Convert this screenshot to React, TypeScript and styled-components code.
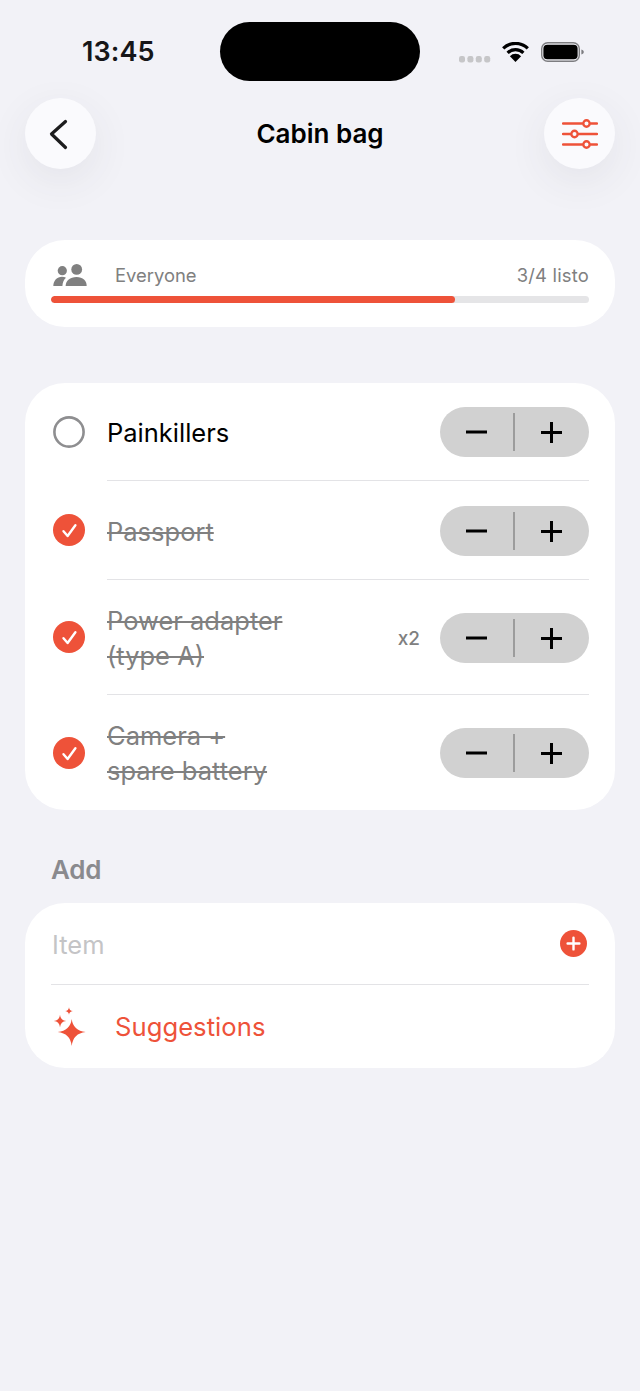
import React from "react";
import styled, { createGlobalStyle } from "styled-components";

const Global = createGlobalStyle`
  html, body { margin: 0; padding: 0; background: #f2f2f7; }
  body { font-family: Inter, "Liberation Sans", sans-serif; color: #000; -webkit-font-smoothing: antialiased; }
`;

const Page = styled.div`
  width: 640px;
  height: 1391px;
  overflow: hidden;
  background: #f2f2f7;
`;

const StatusBar = styled.div`
  display: grid;
  grid-template-columns: 220px 200px 220px;
  height: 98px;
`;

const Time = styled.div`
  font-size: 27px;
  font-weight: 600;
  line-height: 32px;
  margin-top: 36px;
  padding-left: 82px;
  color: #161618;
  letter-spacing: 0.1px;
`;

const Island = styled.div`
  width: 200px;
  height: 59px;
  margin-top: 22px;
  border-radius: 30px;
  background: #000;
`;

const StatusIcons = styled.div`
  display: flex;
  align-items: flex-start;
  padding: 42px 0 0 39px;
  gap: 11px;
`;

const Header = styled.div`
  display: flex;
  align-items: center;
  justify-content: space-between;
  padding: 0 25px;
  height: 71px;
`;

const RoundButton = styled.button`
  width: 71px;
  height: 71px;
  border: 0;
  padding: 0;
  border-radius: 50%;
  background: #fafafd;
  box-shadow: 0 12px 40px rgba(60, 60, 80, 0.08);
  display: flex;
  align-items: center;
  justify-content: center;
`;

const Title = styled.h1`
  margin: 0;
  font-size: 26px;
  font-weight: 600;
  line-height: 32px;
  letter-spacing: 0;
`;

const Card = styled.section<{ $mt: number }>`
  margin: ${(p) => p.$mt}px 25px 0 25px;
  background: #fff;
  border-radius: 40px;
`;

const ProgressCard = styled(Card)`
  height: 87px;
  padding: 19px 26px 0 26px;
  box-sizing: border-box;
`;

const ProgressTop = styled.div`
  display: flex;
  align-items: center;
  height: 32px;
`;

const Who = styled.span`
  font-size: 18.4px;
  color: #808080;
  margin-left: 28px;
  flex: 1;
`;

const Count = styled.span`
  font-size: 18.4px;
  letter-spacing: 0.2px;
  color: #808080;
`;

const Track = styled.div`
  height: 7px;
  margin-top: 5px;
  background: #e5e5e7;
  border-radius: 4px;
  overflow: hidden;
`;

const Fill = styled.div`
  height: 100%;
  background: #ee5239;
  border-radius: 4px;
`;

const Row = styled.div<{ $h: number; $pt: number; $last?: boolean }>`
  position: relative;
  display: flex;
  align-items: center;
  height: ${(p) => p.$h}px;
  padding-top: ${(p) => p.$pt}px;
  margin-left: 82px;
  margin-right: 26px;
  box-sizing: border-box;
  border-bottom: ${(p) => (p.$last ? "0" : "1px solid #e3e3e6")};
`;

const Mark = styled.span`
  position: absolute;
  left: -54px;
  top: 50%;
  margin-top: -16px;
  width: 32px;
  height: 32px;
`;

const Label = styled.div<{ $done: boolean }>`
  flex: 1;
  font-size: 25.5px;
  line-height: 35px;
  letter-spacing: 0;
  white-space: pre-line;
  color: ${(p) => (p.$done ? "#808080" : "#000")};
  text-decoration: ${(p) => (p.$done ? "line-through" : "none")};
  text-decoration-thickness: 2px;
`;

const Qty = styled.span`
  font-size: 19px;
  font-weight: 500;
  color: #808080;
  margin-right: 20px;
`;

const Stepper = styled.div`
  width: 149px;
  height: 50px;
  padding-right: 1px;
  box-sizing: border-box;
  border-radius: 25px;
  background: #d1d1d1;
  display: flex;
  align-items: center;
  justify-content: space-between;
`;

const StepButton = styled.span`
  flex: 1;
  display: flex;
  align-items: center;
  justify-content: center;
`;

const StepDivider = styled.span`
  width: 1.5px;
  height: 38px;
  background: #9c9c9c;
`;

const Section = styled.div`
  margin: 43px 0 0 51px;
  font-size: 26px;
  font-weight: 600;
  line-height: 34px;
  letter-spacing: -0.3px;
  color: #8a8a8e;
`;

const AddCard = styled(Card)`
  padding: 0 26px;
  height: 165px;
`;

const InputRow = styled.div`
  display: flex;
  align-items: center;
  justify-content: space-between;
  height: 82px;
  border-bottom: 1px solid #e3e3e6;
  padding: 0 2px 0 1px;
  box-sizing: border-box;
`;

const Placeholder = styled.span`
  font-size: 25.5px;
  padding-top: 2px;
  color: #c4c4c6;
`;

const SuggestRow = styled.div`
  display: flex;
  align-items: center;
  height: 83px;
  gap: 27px;
  padding-left: 2px;
`;

const SuggestText = styled.span`
  font-size: 25.6px;
  letter-spacing: 0.05px;
  color: #ee5239;
`;

const Wifi = () => (
  <svg width="27" height="20" viewBox="0 0 27 20" style={{ display: "block" }}>
    <path d="M1.2 6.4 A17.6 17.6 0 0 1 25.8 6.4" fill="none" stroke="#000" strokeWidth="3.2" />
    <path d="M5.6 10.8 A11.4 11.4 0 0 1 21.4 10.8" fill="none" stroke="#000" strokeWidth="3.2" />
    <path d="M13.5 20 L7.9 14.2 A7.8 7.8 0 0 1 19.1 14.2 Z" fill="#000" />
  </svg>
);

const Battery = () => (
  <svg width="44" height="20" viewBox="0 0 44 20" style={{ display: "block", marginLeft: 1 }}>
    <rect x="0.7" y="0.7" width="37.6" height="18.6" rx="6" fill="none" stroke="#7d7d80" strokeWidth="1.4" />
    <rect x="2.4" y="2.8" width="34.2" height="14.4" rx="4" fill="#000" />
    <path d="M40.4 7.6 C42 8 42.8 9 42.8 10 C42.8 11 42 12 40.4 12.4 Z" fill="#7d7d80" />
  </svg>
);

const Dots = () => (
  <svg width="32" height="8" viewBox="0 0 32 8" style={{ display: "block", marginTop: 14 }}>
    {[0, 8.4, 16.8, 25.2].map((x) => (
      <rect key={x} x={x} y="0" width="6" height="6.4" rx="2.2" fill="#c6c6c8" />
    ))}
  </svg>
);

const Chevron = () => (
  <svg width="24" height="34" viewBox="0 0 24 34" style={{ display: "block" }}>
    <path d="M16.5 4.5 L2.5 17 L16.5 30.5" fill="none" stroke="#1c1c1e" strokeWidth="3.2" strokeLinecap="round" strokeLinejoin="round" />
  </svg>
);

const Sliders = () => (
  <svg width="36" height="30" viewBox="0 0 36 30" fill="none" stroke="#ee5239" strokeWidth="2.4" strokeLinecap="round" style={{ display: "block" }}>
    <path d="M1 4.5 H20 M29 4.5 H35 M1 15 H8 M17 15 H35 M1 25.5 H20 M29 25.5 H35" />
    <circle cx="24.5" cy="4.5" r="3.2" />
    <circle cx="12.5" cy="15" r="3.2" />
    <circle cx="24.5" cy="25.5" r="3.2" />
  </svg>
);

const People = () => (
  <svg width="34" height="22" viewBox="0 0 34 22" fill="#808080" style={{ display: "block", marginLeft: 2 }}>
    <circle cx="9.3" cy="6.7" r="4.6" />
    <circle cx="23.7" cy="5.4" r="5.4" />
    <path d="M0.3 22 C0.5 16.6 4 12.8 9 12.8 C10.5 12.8 11.8 13.1 13 13.7 C10.8 15.6 9.6 18.4 9.4 22 Z" />
    <path d="M12.6 22 C12.8 16.6 17 13 23.5 13 C30 13 33.6 16.6 33.7 22 Z" />
  </svg>
);

const Unchecked = () => (
  <svg width="32" height="32" viewBox="0 0 32 32" style={{ display: "block" }}>
    <circle cx="16" cy="16" r="14.6" fill="none" stroke="#8e8e90" strokeWidth="2.6" />
  </svg>
);

const Checked = () => (
  <svg width="32" height="32" viewBox="0 0 32 32" style={{ display: "block" }}>
    <circle cx="16" cy="16" r="16" fill="#ee5239" />
    <path d="M10.5 17.2 L14.6 22 L22.4 11.2" fill="none" stroke="#fff" strokeWidth="2.4" strokeLinecap="round" strokeLinejoin="round" />
  </svg>
);

const Minus = () => (
  <svg width="21" height="22" viewBox="0 0 21 22" style={{ display: "block" }}>
    <path d="M0 11 H21" stroke="#000" strokeWidth="3" />
  </svg>
);

const Plus = () => (
  <svg width="21" height="21" viewBox="0 0 21 21" style={{ display: "block" }}>
    <path d="M0 10.5 H21 M10.5 0 V21" stroke="#000" strokeWidth="3" />
  </svg>
);

const PlusCircle = () => (
  <svg width="27" height="27" viewBox="0 0 27 27" style={{ display: "block" }}>
    <circle cx="13.5" cy="13.5" r="13.5" fill="#ee5239" />
    <path d="M7.6 13.5 H19.4 M13.5 7.6 V19.4" stroke="#fff" strokeWidth="2.4" strokeLinecap="round" />
  </svg>
);

const star = (cx: number, cy: number, rx: number, up: number, down: number) => {
  const k = 0.1;
  const a = rx * k;
  return `M${cx} ${cy - up} Q${cx + a} ${cy - a} ${cx + rx} ${cy} Q${cx + a} ${cy + a} ${cx} ${cy + down} Q${cx - a} ${cy + a} ${cx - rx} ${cy} Q${cx - a} ${cy - a} ${cx} ${cy - up} Z`;
};

const Sparkles = () => (
  <svg width="35" height="40" viewBox="0 0 35 40" fill="#ee5239" style={{ display: "block" }}>
    <path d={star(18.7, 25, 14, 13, 14)} />
    <path d={star(7, 14, 6.2, 6.2, 6.2)} />
    <path d={star(16, 4, 3.8, 3.8, 3.8)} />
  </svg>
);

const items = [
  { name: "Painkillers", done: false, h: 98, pt: 1 },
  { name: "Passport", done: true, h: 99, pt: 2 },
  { name: "Power adapter\n(type A)", done: true, qty: "x2", h: 115, pt: 2 },
  { name: "Camera +\nspare battery", done: true, h: 115, pt: 1, last: true },
];

export default function App() {
  return (
    <Page>
      <Global />
      <StatusBar>
        <Time>13:45</Time>
        <Island />
        <StatusIcons>
          <Dots />
          <Wifi />
          <Battery />
        </StatusIcons>
      </StatusBar>
      <Header>
        <RoundButton aria-label="Back">
          <Chevron />
        </RoundButton>
        <Title>Cabin bag</Title>
        <RoundButton aria-label="Filters">
          <Sliders />
        </RoundButton>
      </Header>

      <ProgressCard $mt={71}>
        <ProgressTop>
          <People />
          <Who>Everyone</Who>
          <Count>3/4 listo</Count>
        </ProgressTop>
        <Track>
          <Fill style={{ width: `${(3 / 4) * 100}%` }} />
        </Track>
      </ProgressCard>

      <Card $mt={56}>
        {items.map((it) => (
          <Row key={it.name} $h={it.h} $pt={it.pt} $last={it.last}>
            <Mark>{it.done ? <Checked /> : <Unchecked />}</Mark>
            <Label $done={it.done}>{it.name}</Label>
            {it.qty && <Qty>{it.qty}</Qty>}
            <Stepper>
              <StepButton>
                <Minus />
              </StepButton>
              <StepDivider />
              <StepButton>
                <Plus />
              </StepButton>
            </Stepper>
          </Row>
        ))}
      </Card>

      <Section>Add</Section>
      <AddCard $mt={16}>
        <InputRow>
          <Placeholder>Item</Placeholder>
          <PlusCircle />
        </InputRow>
        <SuggestRow>
          <Sparkles />
          <SuggestText>Suggestions</SuggestText>
        </SuggestRow>
      </AddCard>
    </Page>
  );
}
